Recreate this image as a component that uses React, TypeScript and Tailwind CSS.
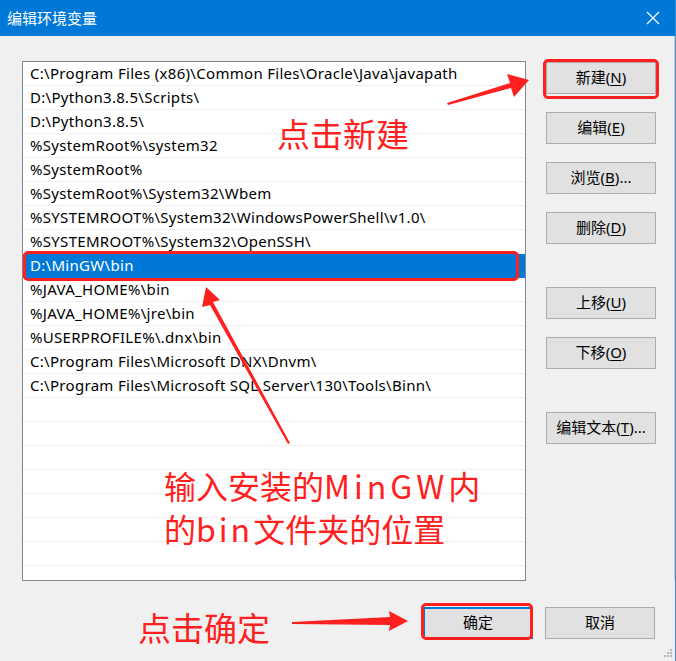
import React from "react";

const paths = [
  "C:\\Program Files (x86)\\Common Files\\Oracle\\Java\\javapath",
  "D:\\Python3.8.5\\Scripts\\",
  "D:\\Python3.8.5\\",
  "%SystemRoot%\\system32",
  "%SystemRoot%",
  "%SystemRoot%\\System32\\Wbem",
  "%SYSTEMROOT%\\System32\\WindowsPowerShell\\v1.0\\",
  "%SYSTEMROOT%\\System32\\OpenSSH\\",
  "D:\\MinGW\\bin",
  "%JAVA_HOME%\\bin",
  "%JAVA_HOME%\\jre\\bin",
  "%USERPROFILE%\\.dnx\\bin",
  "C:\\Program Files\\Microsoft DNX\\Dnvm\\",
  "C:\\Program Files\\Microsoft SQL Server\\130\\Tools\\Binn\\",
];

const rows = [...paths, ...Array(8).fill("")];

function Btn({ label, hot, rest, className = "" }: { label: string; hot?: string; rest?: string; className?: string }) {
  return (
    <div
      className={`flex h-[32px] w-[110px] items-center justify-center border border-[#adadad] bg-[#e1e1e1] text-[15px] text-black ${className}`}
    >
      {label}
      {hot && (
        <>
          (<span className="underline underline-offset-2">{hot}</span>){rest}
        </>
      )}
    </div>
  );
}

export default function App() {
  return (
    <div
      className="relative flex h-[661px] w-[676px] flex-col overflow-hidden border-r border-[#3f8fd8] bg-[#f0f0f0]"
      style={{ fontFamily: '"Noto Sans", "Noto Sans CJK SC", sans-serif' }}
    >
      {/* title bar */}
      <div className="flex h-[36px] items-center justify-between bg-[#0078d7] pl-[7px] pr-[15px] text-white">
        <span className="text-[15px]">编辑环境变量</span>
        <svg width="14" height="14" viewBox="0 0 14 14" className="stroke-white">
          <path d="M1 1 L13 13 M13 1 L1 13" strokeWidth="1.2" />
        </svg>
      </div>

      <div className="flex flex-1 border-r border-[#c8c8c8] pl-[22px] pt-[25px]">
        {/* list */}
        <div className="h-[520px] w-[504px] overflow-hidden border border-[#828790] bg-white">
          {rows.map((p, i) => {
            const sel = i === 8;
            return (
              <div
                key={i}
                className={`flex h-[24px] items-center border-b px-[7px] pt-[1px] text-[15px] tracking-[0.3px] ${
                  sel ? "border-[#0078d7] bg-[#0078d7] text-white" : "border-[#efefef] text-black"
                }`}
              >
                {p}
              </div>
            );
          })}
        </div>

        {/* right buttons */}
        <div className="ml-[20px] flex flex-col pt-[1px]">
          <Btn label="新建" hot="N" />
          <Btn label="编辑" hot="E" className="mt-[18px]" />
          <Btn label="浏览" hot="B" rest="..." className="mt-[18px]" />
          <Btn label="删除" hot="D" className="mt-[18px]" />
          <Btn label="上移" hot="U" className="mt-[43px]" />
          <Btn label="下移" hot="O" className="mt-[18px]" />
          <Btn label="编辑文本" hot="T" rest="..." className="mt-[43px]" />
        </div>
      </div>

      {/* bottom buttons */}
      <div className="flex h-[81px] justify-end gap-[12px] pr-[20px] pt-[26px]">
        <div className="flex h-[32px] w-[110px] items-center justify-center border-2 border-[#0078d7] bg-[#e1e1e1] text-[15px] text-black">
          确定
        </div>
        <Btn label="取消" />
      </div>

      {/* resize grip */}
      <svg className="absolute bottom-[1px] right-[2px]" width="12" height="12" viewBox="0 0 12 12" fill="#b8b8b8">
        <rect x="9" y="1" width="2" height="2" />
        <rect x="6" y="4" width="2" height="2" />
        <rect x="9" y="4" width="2" height="2" />
        <rect x="3" y="7" width="2" height="2" />
        <rect x="6" y="7" width="2" height="2" />
        <rect x="9" y="7" width="2" height="2" />
      </svg>

      {/* annotations */}
      <div className="pointer-events-none absolute left-[543px] top-[59px] h-[40px] w-[116px] rounded-[5px] border-[3px] border-[#ff2020]" />
      <div className="pointer-events-none absolute left-[23px] top-[251px] h-[30px] w-[496px] rounded-[5px] border-[3px] border-[#ff2020]" />
      <div className="pointer-events-none absolute left-[421px] top-[603px] h-[37px] w-[112px] rounded-[5px] border-[3px] border-[#ff2020]" />

      <svg className="pointer-events-none absolute left-0 top-0" width="676" height="661" fill="#ff2020">
        <polygon points="447,103 510,83 507,74 529,80 514,97 511,88 448,105" />
        <polygon points="288,444 210,305 202,307 206,287 220,300 213,302 290,443" />
        <polygon points="292,622 390,617 389,611 408,621 389,631 390,625 292,624" />
      </svg>

      <div
        className="pointer-events-none absolute left-[277px] top-[109px] text-[33px] leading-[48px] text-[#ff2020]"
        style={{ fontFamily: '"Noto Sans CJK SC", sans-serif' }}
      >
        点击新建
      </div>
      <div
        className="pointer-events-none absolute left-[164px] top-[464px] text-[32px] leading-[43px] text-[#ff2020]"
        style={{ fontFamily: '"Noto Sans CJK SC", sans-serif' }}
      >
        输入安装的<span className="tracking-[4px]">MinGW</span>内
        <br />
        的<span className="tracking-[3px]">bin</span>文件夹的位置
      </div>
      <div
        className="pointer-events-none absolute left-[138px] top-[603px] text-[33px] leading-[48px] text-[#ff2020]"
        style={{ fontFamily: '"Noto Sans CJK SC", sans-serif' }}
      >
        点击确定
      </div>
    </div>
  );
}
